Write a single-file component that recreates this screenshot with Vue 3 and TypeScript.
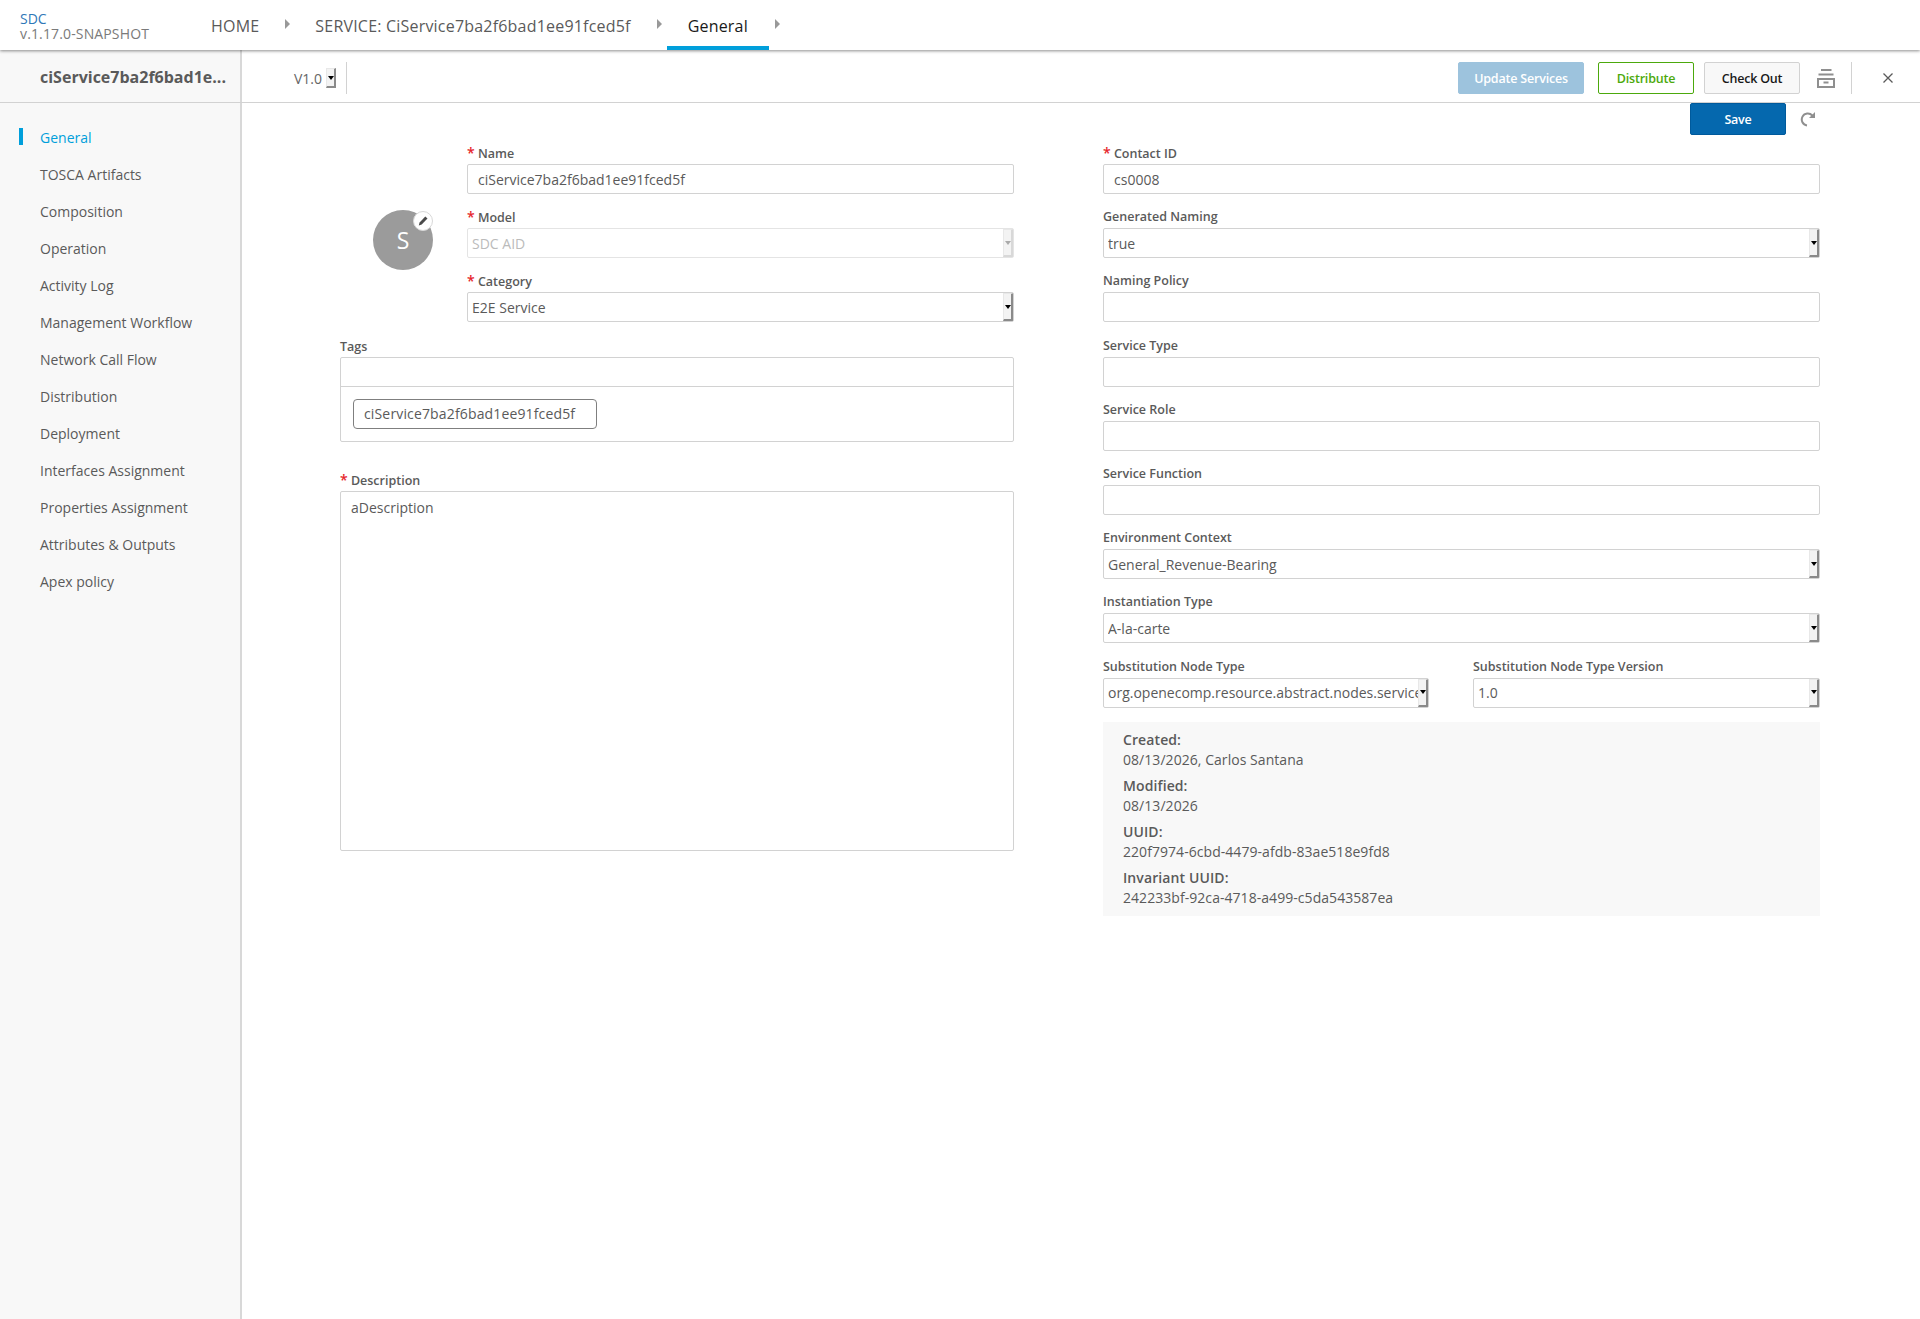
<template>
  <div class="page">
    <header class="top-nav">
      <div class="brand">
        <div class="brand-name">SDC</div>
        <div class="brand-version">v.1.17.0-SNAPSHOT</div>
      </div>
      <nav class="crumbs">
        <template v-for="c in crumbs" :key="c.label">
          <div class="crumb" :class="{ active: c.active }">{{ c.label }}</div>
          <span class="crumb-arrow"></span>
        </template>
      </nav>
    </header>

    <div class="workspace">
      <aside class="sidebar">
        <div class="side-title">ciService7ba2f6bad1e...</div>
        <ul class="side-menu">
          <li v-for="(m, i) in menu" :key="m" :class="{ active: i === 0 }">{{ m }}</li>
        </ul>
      </aside>

      <main class="content">
        <div class="toolbar">
          <div class="version">
            <span>V1.0</span>
            <span class="sel-btn small"><i></i></span>
          </div>
          <div class="tool-sep"></div>
          <div class="tool-actions">
            <button class="btn update">Update Services</button>
            <button class="btn distribute">Distribute</button>
            <button class="btn checkout">Check Out</button>
            <svg class="archive" width="18" height="19" viewBox="0 0 18 19" fill="none" stroke="#8f8f8f" stroke-width="2">
              <path d="M4 1h10.500M1.500 5.500h15" />
              <path d="M1 10h16v8H1z" />
              <path d="M6.500 13.500h5" />
            </svg>
            <div class="tool-sep right"></div>
            <svg class="close" width="12" height="12" viewBox="0 0 12 12" fill="none" stroke="#5a5a5a" stroke-width="1.300">
              <path d="M1.500 1.500l9 9M10.500 1.500l-9 9" />
            </svg>
          </div>
        </div>

        <div class="save-row">
          <button class="btn save">Save</button>
          <svg class="revert" width="16" height="16" viewBox="0 0 16 16" fill="none">
            <path d="M12.300 4.500A6 6 0 1 0 7 14.400" stroke="#8f8f8f" stroke-width="2" />
            <path d="M15 1v6H9z" fill="#8f8f8f" />
          </svg>
        </div>

        <div class="form">
          <section class="col-left">
            <div class="identity">
              <div class="avatar-wrap">
                <div class="avatar">S</div>
                <div class="avatar-edit">
                  <svg width="12" height="12" viewBox="0 0 12 12">
                    <path d="M8.300 1.500l2.200 2-5.800 6-2.900 1 .8-3z" fill="#4a4a4a" />
                  </svg>
                </div>
              </div>
              <div class="identity-fields">
                <div class="field">
                  <label><b>*</b> Name</label>
                  <input class="input" value="ciService7ba2f6bad1ee91fced5f" readonly />
                </div>
                <div class="field">
                  <label><b>*</b> Model</label>
                  <div class="select disabled">
                    <span>SDC AID</span>
                    <span class="sel-btn"><i></i></span>
                  </div>
                </div>
                <div class="field">
                  <label><b>*</b> Category</label>
                  <div class="select">
                    <span>E2E Service</span>
                    <span class="sel-btn"><i></i></span>
                  </div>
                </div>
              </div>
            </div>

            <div class="field tags-field">
              <label>Tags</label>
              <div class="tags-box">
                <div class="tags-input"></div>
                <div class="tags-list">
                  <span class="tag">ciService7ba2f6bad1ee91fced5f</span>
                </div>
              </div>
            </div>

            <div class="field desc-field">
              <label><b>*</b> Description</label>
              <div class="textarea">aDescription</div>
            </div>
          </section>

          <section class="col-right">
            <div class="field">
              <label><b>*</b> Contact ID</label>
              <input class="input" value="cs0008" readonly />
            </div>
            <div class="field" v-for="f in rightFields" :key="f.label">
              <label>{{ f.label }}</label>
              <div v-if="f.value" class="select">
                <span>{{ f.value }}</span>
                <span class="sel-btn"><i></i></span>
              </div>
              <input v-else class="input" readonly />
            </div>
            <div class="subst-row">
              <div class="field subst-type">
                <label>Substitution Node Type</label>
                <div class="select">
                  <span>org.openecomp.resource.abstract.nodes.service</span>
                  <span class="sel-btn"><i></i></span>
                </div>
              </div>
              <div class="field subst-version">
                <label>Substitution Node Type Version</label>
                <div class="select">
                  <span>1.0</span>
                  <span class="sel-btn"><i></i></span>
                </div>
              </div>
            </div>
            <div class="meta">
              <div class="meta-item" v-for="m in meta" :key="m.label">
                <div class="meta-label">{{ m.label }}</div>
                <div class="meta-value">{{ m.value }}</div>
              </div>
            </div>
          </section>
        </div>
      </main>
    </div>
  </div>
</template>

<script setup lang="ts">
const crumbs = [
  { label: 'HOME', active: false },
  { label: 'SERVICE: CiService7ba2f6bad1ee91fced5f', active: false },
  { label: 'General', active: true },
]

const menu = [
  'General',
  'TOSCA Artifacts',
  'Composition',
  'Operation',
  'Activity Log',
  'Management Workflow',
  'Network Call Flow',
  'Distribution',
  'Deployment',
  'Interfaces Assignment',
  'Properties Assignment',
  'Attributes & Outputs',
  'Apex policy',
]

const rightFields = [
  { label: 'Generated Naming', value: 'true' },
  { label: 'Naming Policy', value: '' },
  { label: 'Service Type', value: '' },
  { label: 'Service Role', value: '' },
  { label: 'Service Function', value: '' },
  { label: 'Environment Context', value: 'General_Revenue-Bearing' },
  { label: 'Instantiation Type', value: 'A-la-carte' },
]

const meta = [
  { label: 'Created:', value: '08/13/2026, Carlos Santana' },
  { label: 'Modified:', value: '08/13/2026' },
  { label: 'UUID:', value: '220f7974-6cbd-4479-afdb-83ae518e9fd8' },
  { label: 'Invariant UUID:', value: '242233bf-92ca-4718-a499-c5da543587ea' },
]
</script>

<style>
html,
body {
  margin: 0;
  background: #fff;
}
</style>

<style scoped>
.page {
  height: 1319px;
  display: flex;
  flex-direction: column;
  font-family: "Open Sans", "Liberation Sans", sans-serif;
  font-size: 14px;
  color: #5a5a5a;
  overflow: hidden;
}
.top-nav {
  height: 50px;
  flex: none;
  display: flex;
  background: #fff;
  box-shadow: 0 1px 3px rgba(0, 0, 0, 0.45);
  position: relative;
  z-index: 2;
}
.brand {
  width: 191px;
  padding: 11px 0 0 20px;
  box-sizing: border-box;
  font-size: 14px;
  line-height: 15px;
}
.brand-name {
  color: #2f78b8;
}
.brand-version {
  color: #7a7a7a;
  letter-spacing: 0.14px;
}
.crumbs {
  display: flex;
}
.crumb {
  height: 50px;
  box-sizing: border-box;
  padding: 0 20px;
  line-height: 52px;
  font-size: 16px;
  letter-spacing: 0.2px;
}
.crumb.active {
  padding: 0 21px;
  color: #191919;
  border-bottom: 4px solid #009fdb;
}
.crumb-arrow {
  width: 0;
  height: 0;
  margin: 19px 5px 0 6px;
  border-left: 5px solid #999;
  border-top: 5px solid transparent;
  border-bottom: 5px solid transparent;
}
.workspace {
  flex: 1;
  display: flex;
  min-height: 0;
}
.sidebar {
  width: 242px;
  flex: none;
  background: #f8f8f8;
  border-right: 2px solid #d8d8d8;
  box-sizing: border-box;
}
.side-title {
  height: 53px;
  box-sizing: border-box;
  padding-left: 40px;
  line-height: 55px;
  font-size: 16px;
  font-weight: 700;
  color: #5a5a5a;
  border-bottom: 1px solid #d2d2d2;
  margin-right: -2px;
}
.side-menu {
  list-style: none;
  margin: 0;
  padding: 16px 0 0 19px;
}
.side-menu li {
  height: 37px;
  line-height: 37px;
  padding-left: 21px;
  color: #5a5a5a;
}
.side-menu li.active {
  color: #009fdb;
  position: relative;
}
.side-menu li.active::before {
  content: '';
  position: absolute;
  left: 0;
  top: 9px;
  width: 4px;
  height: 17px;
  background: #009fdb;
}
.content {
  flex: 1;
  min-width: 0;
}
.toolbar {
  height: 53px;
  box-sizing: border-box;
  border-bottom: 1px solid #d2d2d2;
  display: flex;
  align-items: center;
  padding: 4px 0 0 52px;
}
.version {
  display: flex;
  align-items: center;
  gap: 4px;
  color: #666;
}
.tool-sep {
  width: 1px;
  height: 32px;
  background: #d2d2d2;
  margin-left: 10px;
}
.tool-actions {
  margin-left: auto;
  display: flex;
  align-items: center;
}
.btn {
  font-family: inherit;
  font-size: 12.500px;
  letter-spacing: -0.2px;
  height: 32px;
  border-radius: 2px;
  border: 1px solid transparent;
  box-sizing: border-box;
  padding: 0;
  font-weight: 600;
}
.update {
  width: 126px;
  background: #9dc3dd;
  border-color: #9dc3dd;
  color: #fff;
}
.distribute {
  width: 96px;
  margin-left: 14px;
  background: #fff;
  border-color: #4ca90c;
  color: #4ca90c;
}
.checkout {
  width: 96px;
  margin-left: 10px;
  background: #f8f8f8;
  border-color: #d2d2d2;
  color: #191919;
}
.archive {
  margin-left: 17px;
}
.tool-sep.right {
  margin-left: 16px;
}
.close {
  margin-left: 30px;
  margin-right: 26px;
}
.save-row {
  display: flex;
  justify-content: flex-end;
  align-items: center;
  padding-right: 104px;
}
.save {
  width: 96px;
  background: #0568ae;
  border-color: #005a9c;
  color: #fff;
}
.revert {
  margin-left: 14px;
}
.form {
  display: flex;
  gap: 89px;
  padding: 9px 100px 0 98px;
}
.col-left {
  width: 674px;
  flex: none;
}
.col-right {
  flex: 1;
  min-width: 0;
}
.identity {
  display: flex;
}
.avatar-wrap {
  position: relative;
  width: 60px;
  height: 60px;
  margin: 66px 0 0 33px;
  flex: none;
}
.avatar {
  width: 60px;
  height: 60px;
  border-radius: 50%;
  background: #9b9b9b;
  color: #fff;
  font-size: 23px;
  line-height: 60px;
  text-align: center;
}
.avatar-edit {
  position: absolute;
  top: 1px;
  right: 0;
  width: 20px;
  height: 20px;
  border-radius: 50%;
  background: #fff;
  border: 1px solid #d8d8d8;
  box-sizing: border-box;
  display: flex;
  align-items: center;
  justify-content: center;
}
.identity-fields {
  flex: 1;
  margin-left: 34px;
}
.field {
  height: 64.200px;
}
.field label {
  display: block;
  height: 20px;
  line-height: 18px;
  font-size: 12.500px;
  font-weight: 600;
  color: #5a5a5a;
}
.field label b {
  color: #e6252b;
  font-weight: 600;
  font-size: 14px;
}
.input,
.select,
.textarea {
  display: block;
  width: 100%;
  height: 30px;
  box-sizing: border-box;
  border: 1px solid #d2d2d2;
  border-radius: 2px;
  background: #fff;
  font-family: inherit;
  font-size: 14px;
  color: #5a5a5a;
  outline: none;
}
.input {
  padding: 0 10px;
}
.select {
  display: flex;
  align-items: center;
  justify-content: space-between;
  padding-left: 4px;
  overflow: hidden;
  white-space: nowrap;
}
.select > span:first-child {
  overflow: hidden;
  flex: 1;
  min-width: 0;
}
.select.disabled {
  color: #bbb;
  border-color: #e4e4e4;
}
.sel-btn {
  flex: none;
  width: 10px;
  height: 28px;
  box-sizing: border-box;
  background: #f3f3f3;
  border-right: 2px solid #8a8a8a;
  border-bottom: 2px solid #8a8a8a;
  border-top: 1px solid #e8e8e8;
  border-left: 1px solid #e8e8e8;
  display: flex;
  align-items: center;
  justify-content: center;
}
.sel-btn i {
  width: 0;
  height: 0;
  border-left: 3px solid transparent;
  border-right: 3px solid transparent;
  border-top: 4px solid #000;
  flex: none;
}
.sel-btn.small {
  height: 20px;
}
.select.disabled .sel-btn {
  border-right-color: #d8d8d8;
  border-bottom-color: #d8d8d8;
}
.select.disabled .sel-btn i {
  border-top-color: #aaa;
}
.tags-field {
  height: auto;
  margin-top: 0.400px;
}
.tags-field label {
  line-height: 19px;
}
.tags-box {
  border: 1px solid #d2d2d2;
  border-radius: 2px;
  height: 85px;
  box-sizing: border-box;
}
.tags-input {
  height: 28px;
  border-bottom: 1px solid #d2d2d2;
}
.tags-list {
  padding: 12px 0 0 12px;
}
.tag {
  display: block;
  width: 244px;
  height: 30px;
  line-height: 28px;
  padding-left: 10px;
  border: 1px solid #7f7f7f;
  border-radius: 4px;
  white-space: nowrap;
  letter-spacing: 0.15px;
  box-sizing: border-box;
}
.desc-field {
  height: auto;
  margin-top: 29px;
}
.textarea {
  height: 360px;
  padding: 6px 10px;
  line-height: 20px;
}
.subst-row {
  display: flex;
  gap: 44px;
}
.subst-type {
  width: 326px;
  flex: none;
}
.subst-version {
  flex: 1;
  min-width: 0;
}
.meta {
  background: #f8f8f8;
  height: 194px;
  box-sizing: border-box;
  padding: 8px 20px;
  margin-top: 0.200px;
}
.meta-item {
  margin-bottom: 6px;
}
.meta-label {
  font-weight: 600;
  line-height: 20px;
  letter-spacing: 0.1px;
}
.meta-value {
  line-height: 20px;
  letter-spacing: 0.05px;
}
</style>
